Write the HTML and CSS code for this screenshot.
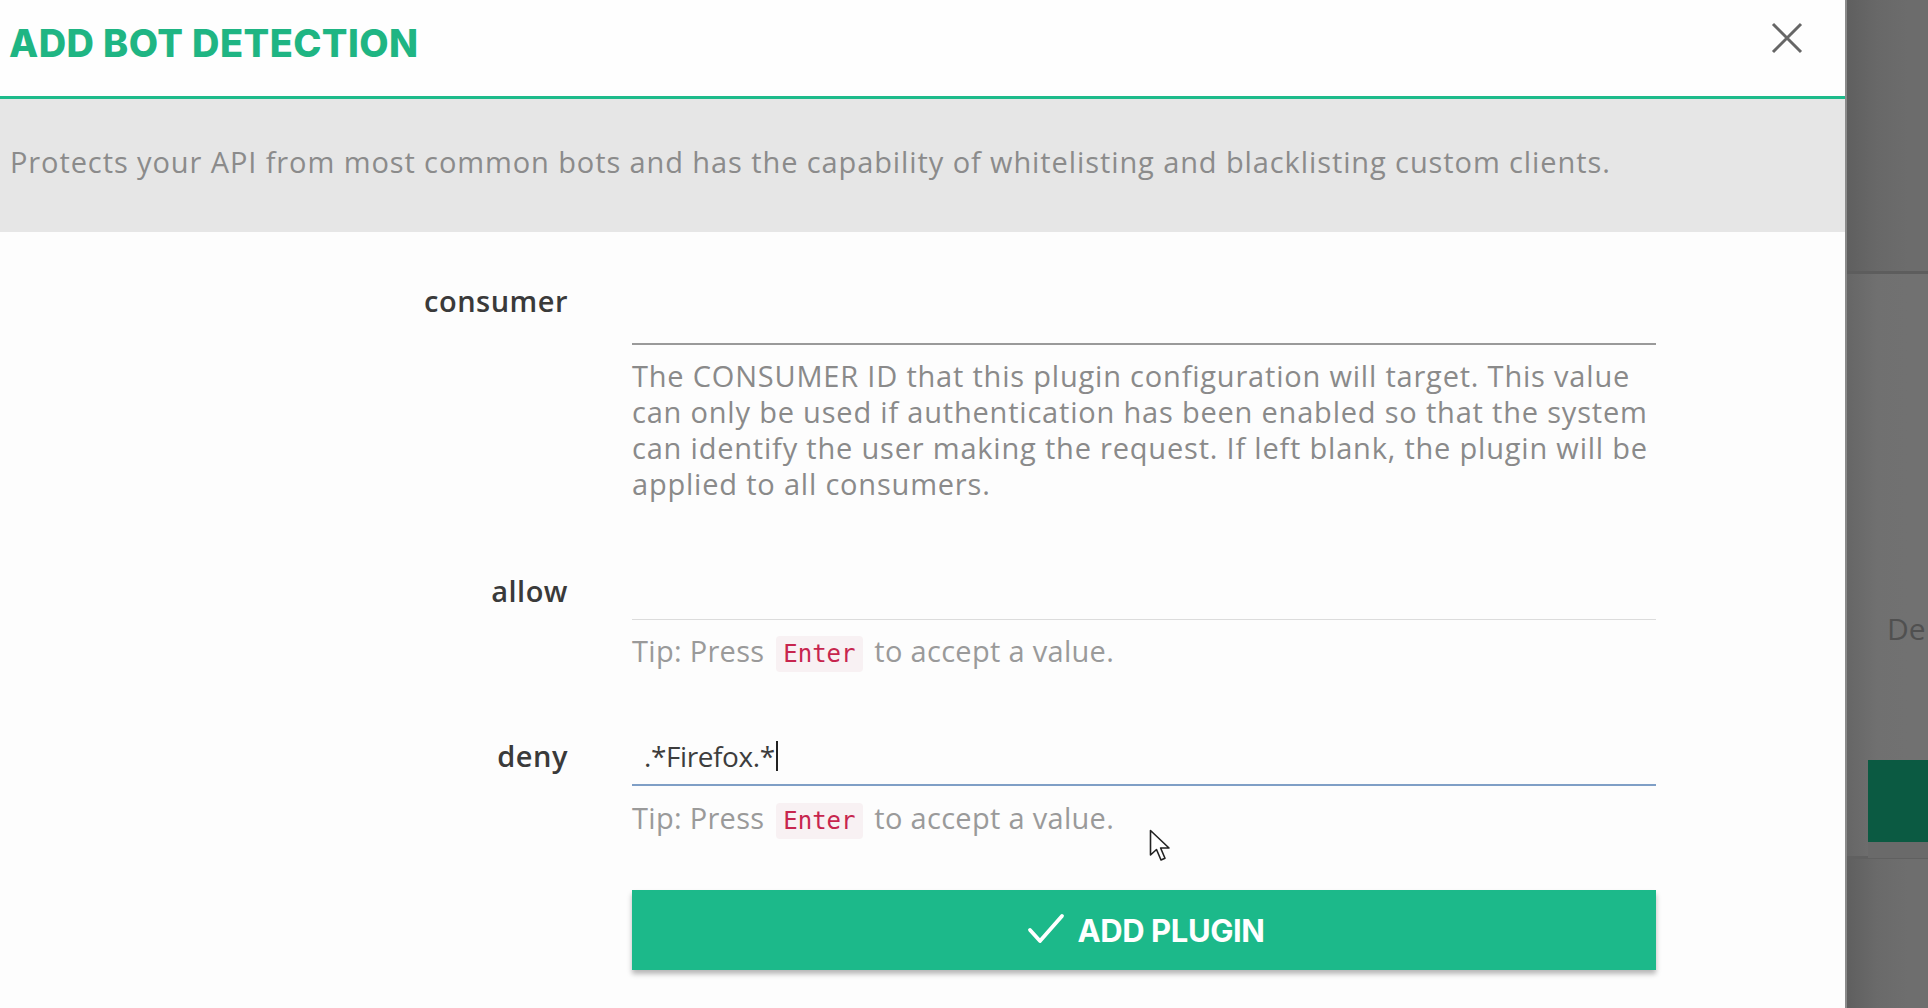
FILE: index.html
```html
<!DOCTYPE html>
<html lang="en">
<head>
<meta charset="utf-8">
<title>Add Bot Detection</title>
<link rel="stylesheet" href="styles.css">
</head>
<body>
<div class="page">
  <div class="modal">
    <header class="modal-header">
      <h1 class="modal-title">ADD BOT DETECTION</h1>
      <button class="close" aria-label="Close">
        <svg width="32" height="32" viewBox="0 0 32 32"><path d="M2 2 L30 30 M30 2 L2 30" stroke="#666" stroke-width="3" fill="none"/></svg>
      </button>
    </header>
    <div class="intro">Protects your API from most common bots and has the capability of whitelisting and blacklisting custom clients.</div>
    <form class="form">
      <div class="row row-consumer">
        <label class="label">consumer</label>
        <div class="field">
          <div class="input input-dark"></div>
          <p class="help">The CONSUMER ID that this plugin configuration will target. This value<br>can only be used if authentication has been enabled so that the system<br>can identify the user making the request. If left blank, the plugin will be<br>applied to all consumers.</p>
        </div>
      </div>
      <div class="row row-allow">
        <label class="label">allow</label>
        <div class="field">
          <div class="input input-light"></div>
          <p class="tip">Tip: Press <code>Enter</code> to accept a value.</p>
        </div>
      </div>
      <div class="row row-deny">
        <label class="label">deny</label>
        <div class="field">
          <div class="input input-focus"><span class="value">.*Firefox.*</span><span class="caret"></span></div>
          <p class="tip tip-deny">Tip: Press <code>Enter</code> to accept a value.</p>
        </div>
      </div>
      <div class="row row-submit">
        <div class="label"></div>
        <div class="field">
          <button type="button" class="submit">
            <svg class="check" width="38" height="32" viewBox="0 0 38 32"><path d="M3 17 L13 28 L35 3" stroke="#fff" stroke-width="3.8" fill="none" stroke-linecap="round" stroke-linejoin="round"/></svg>
            <span>ADD PLUGIN</span>
          </button>
        </div>
      </div>
    </form>
    <svg class="pointer" width="24" height="36" viewBox="0 0 24 36"><path d="M1.5 1.5 L1.5 26 L7.5 20.5 L12 31 L16 29.2 L11.6 19 L20 19 Z" fill="#fff" stroke="#222" stroke-width="1.6" stroke-linejoin="round"/></svg>
  </div>
  <aside class="backdrop">
    <div class="bd-top"></div>
    <div class="bd-mid">
      <span class="bd-text">De</span>
      <div class="bd-btn"></div>
    </div>
    <div class="bd-bottom"></div>
  </aside>
</div>
</body>
</html>
```

FILE: styles.css
```css
* { box-sizing: border-box; }
html, body { margin: 0; padding: 0; }
body {
  width: 1928px;
  height: 1008px;
  overflow: hidden;
  background: #fff;
  font-family: "Open Sans", "Liberation Sans", sans-serif;
}
.page {
  display: flex;
  height: 1008px;
}
.modal {
  position: relative;
  width: 1845px;
  flex: none;
  background: #fdfdfd;
}
.modal-header {
  height: 99px;
  border-bottom: 3px solid #1dbb8b;
  display: flex;
  justify-content: space-between;
  align-items: flex-start;
  padding: 0 0 0 9px;
  background: #fefefe;
}
.modal-title {
  margin: 0;
  padding-top: 20px;
  font-family: Inter, "Open Sans", sans-serif;
  font-weight: 800;
  font-size: 38px;
  line-height: 46px;
  color: #1fb583;
  letter-spacing: 0.4px;
}
.close {
  margin: 22px 42px 0 0;
  padding: 0;
  border: 0;
  background: none;
  width: 32px;
  height: 32px;
}
.intro {
  height: 133px;
  background: #e6e6e6;
  padding: 44px 10px 0;
  font-size: 29px;
  line-height: 38px;
  color: #8b8b8b;
  letter-spacing: 0.9px;
  white-space: nowrap;
}
.form {
  padding-top: 40px;
}
.row {
  display: flex;
  gap: 64px;
}
.label {
  width: 568px;
  flex: none;
  text-align: right;
  font-size: 29px;
  line-height: 36px;
  font-weight: 600;
  color: #3a3a3a;
  letter-spacing: 0.5px;
}
.field {
  width: 1024px;
  flex: none;
}
.input {
  display: flex;
  align-items: center;
}
.input-dark {
  height: 73px;
  border-bottom: 2px solid #9a9a9a;
}
.input-light {
  height: 60px;
  border-bottom: 1px solid #dcdcdc;
}
.input-focus {
  height: 62px;
  border-bottom: 2px solid #7f9fc6;
  padding: 4px 0 0 12px;
}
.value {
  font-size: 28px;
  color: #3d3d3d;
  letter-spacing: -0.4px;
}
.caret {
  display: inline-block;
  width: 2px;
  height: 30px;
  background: #222;
  margin-left: 1px;
}
.row-consumer .label { padding-top: 11px; }
.help {
  width: 1100px;
  margin: 13px 0 0;
  font-size: 29px;
  line-height: 36px;
  color: #8a8a8a;
  letter-spacing: 0.8px;
  white-space: nowrap;
}
.row-allow { margin-top: 58px; }
.row-allow .label { padding-top: 13px; }
.tip {
  margin: 12px 0 0;
  font-size: 29px;
  line-height: 38px;
  color: #9a9a9a;
  letter-spacing: 0.3px;
}
.tip-deny { margin-top: 13px; }
code {
  display: inline-block;
  font-family: "DejaVu Sans Mono", "Liberation Mono", monospace;
  font-size: 24px;
  line-height: 36px;
  padding: 0 7px;
  color: #c7254e;
  background: #f8f1f3;
  border-radius: 4px;
  margin: 0 4px;
  letter-spacing: 0;
}
.row-deny { margin-top: 52px; }
.row-deny .label { padding-top: 14px; }
.row-submit { margin-top: 51px; }
.submit {
  width: 1024px;
  height: 80px;
  border: 0;
  background: #1cb98a;
  box-shadow: 0 4px 5px rgba(0,0,0,0.28);
  display: flex;
  align-items: center;
  justify-content: center;
  gap: 12px;
  color: #fff;
  font-family: Inter, "Open Sans", sans-serif;
  font-weight: 700;
  font-size: 31px;
  letter-spacing: -0.4px;
  padding: 0 0 0 4px;
}
.check { margin-top: -2px; }
.pointer {
  position: absolute;
  left: 1149px;
  top: 829px;
}
.backdrop {
  flex: 1;
  display: flex;
  flex-direction: column;
  background: #6c6c6c;
  border-left: 2px solid #8a8a8a;
}
.bd-top {
  height: 274px;
  background: linear-gradient(90deg, #5f5f5f 0, #686868 30px, #6c6c6c 60px);
  border-bottom: 3px solid #5d5d5d;
}
.bd-mid {
  height: 585px;
  background: linear-gradient(90deg, #666 0, #707070 30px, #717171 60px);
  padding: 335px 0 0 21px;
  border-bottom: 3px solid #606060;
}
.bd-text {
  display: block;
  height: 40px;
  margin-left: 19px;
  font-size: 30px;
  line-height: 40px;
  color: #505050;
  white-space: nowrap;
}
.bd-btn {
  margin-top: 111px;
  height: 82px;
  background: #0b5a42;
  border-bottom: 16px solid #6a6a6a;
  box-sizing: content-box;
}
.bd-bottom {
  flex: 1;
  background: linear-gradient(90deg, #5f5f5f 0, #6a6a6a 30px, #6e6e6e 60px);
}
```
